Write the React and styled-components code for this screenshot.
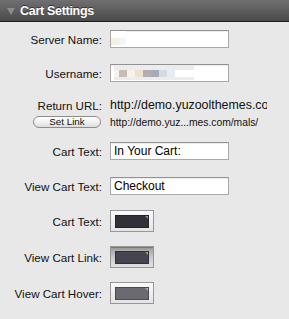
import React from "react";
import styled, { createGlobalStyle } from "styled-components";

const Global = createGlobalStyle`
  html, body { margin: 0; padding: 0; background: #e8e8e8; }
  body { font-family: "Liberation Sans", Arial, sans-serif; color: #111; }
`;

const Panel = styled.div`
  width: 289px;
  height: 319px;
  background: #e8e8e8;
  overflow: hidden;
`;

const Header = styled.div`
  height: 21px;
  display: flex;
  align-items: center;
  gap: 5px;
  padding-left: 7px;
  background: linear-gradient(#707070, #4a4a4a);
  border-bottom: 1px solid #1c1c1c;
`;

const Arrow = styled.span`
  width: 0;
  height: 0;
  border-left: 4px solid transparent;
  border-right: 4px solid transparent;
  border-top: 7px solid #8c8c8c;
  margin-top: 1px;
`;

const Title = styled.span`
  font-family: "Liberation Sans", Arial, sans-serif;
  font-weight: bold;
  font-size: 12.5px;
  letter-spacing: -0.3px;
  color: #fff;
  text-shadow: 0 -1px 0 rgba(0, 0, 0, 0.5);
`;

const Form = styled.div`
  display: flex;
  flex-direction: column;
  padding-top: 8px;
`;

const Row = styled.div`
  display: flex;
  align-items: center;
  gap: 8px;
  height: ${(p) => p.$h}px;
  margin-top: ${(p) => p.$mt || 0}px;
`;

const Label = styled.div`
  width: 102px;
  flex: none;
  text-align: right;
  font-size: 11.6px;
  color: #111;
  white-space: nowrap;
`;

const LabelCell = styled.div`
  width: 102px;
  flex: none;
  display: flex;
  justify-content: flex-end;
`;

const Field = styled.div`
  box-sizing: border-box;
  width: 119px;
  height: 18px;
  background: #fff;
  border: 1px solid #a9a9a9;
  border-top-color: #929292;
  box-shadow: inset 0 1px 1px rgba(0, 0, 0, 0.08);
  display: flex;
  align-items: ${(p) => (p.$top ? "flex-start" : "center")};
  padding-left: ${(p) => (p.$flush ? 0 : 3)}px;
  font-size: 12px;
  color: #000;
`;

const Blur = styled.div`
  display: flex;
  flex-direction: column;
  justify-content: ${(p) => (p.$top ? "flex-end" : "center")};
  padding-bottom: ${(p) => (p.$top ? 1 : 0)}px;
  box-sizing: border-box;
  width: ${(p) => p.$w}px;
  height: ${(p) => p.$hh}px;
  background: ${(p) => p.$bg};
`;

const Cells = styled.div`
  display: flex;
  height: 7px;
`;

const Cell = styled.span`
  width: ${(p) => p.$w || 8}px;
  height: 7px;
  background: ${(p) => p.$c};
`;

const Url = styled.div`
  width: 157px;
  overflow: hidden;
  white-space: nowrap;
  font-size: 12.4px;
  color: #111;
`;

const SmallUrl = styled.div`
  white-space: nowrap;
  font-size: 10.3px;
  color: #111;
`;

const PillButton = styled.button`
  box-sizing: border-box;
  width: 68px;
  height: 12px;
  margin-right: 1px;
  padding: 0;
  border: 1px solid #8d8d8d;
  border-radius: 6px;
  background: linear-gradient(#ffffff, #f2f2f2 50%, #dcdcdc);
  font-family: "Liberation Sans", Arial, sans-serif;
  font-size: 9.8px;
  line-height: 10px;
  color: #111;
  display: flex;
  align-items: center;
  justify-content: center;
`;

const Swatch = styled.div`
  box-sizing: border-box;
  width: 44px;
  height: 22px;
  border: 1px solid #979797;
  background: ${(p) =>
    p.$pressed
      ? "linear-gradient(#8e8e8e, #a9a9a9 15%, #cdcdcd 55%, #e2e2e2)"
      : "linear-gradient(#fbfbfb, #efefef 50%, #e4e4e4)"};
  box-shadow: ${(p) => (p.$pressed ? "inset 0 1px 0 #777" : "none")};
  display: flex;
  align-items: center;
  justify-content: center;
`;

const Chip = styled.div`
  box-sizing: border-box;
  width: 34px;
  height: 13px;
  background: ${(p) => p.$c};
  border: 1px solid rgba(0, 0, 0, 0.3);
  position: relative;
  &::after {
    content: "";
    position: absolute;
    top: 0;
    right: 0;
    width: 0;
    height: 0;
    border-top: 3px solid rgba(255, 255, 255, 0.45);
    border-left: 3px solid transparent;
  }
`;

export default function App() {
  return (
    <>
      <Global />
      <Panel>
        <Header>
          <Arrow />
          <Title>Cart Settings</Title>
        </Header>
        <Form>
          <Row $h={18}>
            <Label>Server Name:</Label>
            <Field $flush $top>
              <Blur $w={15} $hh={15} $bg="#ffffff" $top>
                <Cells>
                  <Cell $c="#f4f1e2" />
                  <Cell $c="#f2f6fb" $w={7} />
                </Cells>
              </Blur>
            </Field>
          </Row>
          <Row $h={18} $mt={16}>
            <Label>Username:</Label>
            <Field>
              <Blur $w={80} $hh={14} $bg="#ececec">
                <Cells>
                  <Cell $c="#f6f4f0" $w={5} />
                  <Cell $c="#c9bdb3" />
                  <Cell $c="#f5f2eb" />
                  <Cell $c="#ebe1cf" />
                  <Cell $c="#b4adaf" />
                  <Cell $c="#a7abb7" />
                  <Cell $c="#d3dbe4" />
                  <Cell $c="#e5eef5" />
                  <Cell $c="#ffffff" $w={19} />
                </Cells>
              </Blur>
            </Field>
          </Row>
          <Row $h={14} $mt={16}>
            <Label>Return URL:</Label>
            <Url>http://demo.yuzoolthemes.com/mals/</Url>
          </Row>
          <Row $h={12} $mt={4}>
            <LabelCell>
              <PillButton>Set Link</PillButton>
            </LabelCell>
            <SmallUrl>http://demo.yuz...mes.com/mals/</SmallUrl>
          </Row>
          <Row $h={18} $mt={14}>
            <Label>Cart Text:</Label>
            <Field>In Your Cart:</Field>
          </Row>
          <Row $h={18} $mt={17}>
            <Label>View Cart Text:</Label>
            <Field>Checkout</Field>
          </Row>
          <Row $h={22} $mt={15}>
            <Label>Cart Text:</Label>
            <Swatch>
              <Chip $c="#323139" />
            </Swatch>
          </Row>
          <Row $h={22} $mt={14}>
            <Label>View Cart Link:</Label>
            <Swatch $pressed>
              <Chip $c="#46454f" />
            </Swatch>
          </Row>
          <Row $h={22} $mt={14}>
            <Label>View Cart Hover:</Label>
            <Swatch>
              <Chip $c="#6b6a70" />
            </Swatch>
          </Row>
        </Form>
      </Panel>
    </>
  );
}
